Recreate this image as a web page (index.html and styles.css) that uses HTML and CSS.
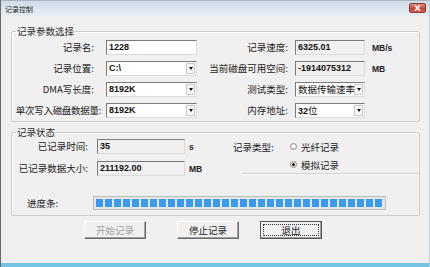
FILE: index.html
```html
<!DOCTYPE html>
<html lang="zh-CN">
    <head>
        <meta charset="UTF-8" />
        <meta name="viewport" content="width=device-width, initial-scale=1.0" />
        <title>记录控制</title>
        <link rel="stylesheet" href="styles.css">
    </head>
    <body>
        <div class="window">
            <div class="titlebar">
                <span class="title">记录控制</span>
                <span class="close-btn">
                    <svg width="7" height="6" viewBox="0 0 7 6">
                        <path d="M1 0.5 L6 5.5 M6 0.5 L1 5.5" stroke="#fff" stroke-width="1.6" />
                    </svg>
                </span>
            </div>
            <div class="client">
                <fieldset class="group group-params">
                    <legend>记录参数选择</legend>
                    <div class="param-grid">
                        <label class="lbl">记录名:</label>
                        <div class="edit">1228</div>
                        <label class="lbl lbl-right">记录速度:</label>
                        <div class="edit readonly">6325.01</div>
                        <span class="unit">MB/s</span>

                        <label class="lbl">记录位置:</label>
                        <div class="combo"><span class="combo-text">C:\</span><span class="combo-btn"></span></div>
                        <label class="lbl lbl-right">当前磁盘可用空间:</label>
                        <div class="edit readonly">-1914075312</div>
                        <span class="unit">MB</span>

                        <label class="lbl">DMA写长度:</label>
                        <div class="combo"><span class="combo-text">8192K</span><span class="combo-btn"></span></div>
                        <label class="lbl lbl-right">测试类型:</label>
                        <div class="combo"><span class="combo-text cjk">数据传输速率</span><span class="combo-btn"></span></div>
                        <span></span>

                        <label class="lbl lbl-long">单次写入磁盘数据量:</label>
                        <div class="combo"><span class="combo-text">8192K</span><span class="combo-btn"></span></div>
                        <label class="lbl lbl-right">内存地址:</label>
                        <div class="combo"><span class="combo-text">32<span class="cjk">位</span></span><span class="combo-btn"></span></div>
                        <span></span>
                    </div>
                </fieldset>

                <fieldset class="group group-status">
                    <legend>记录状态</legend>
                    <div class="status-top">
                        <div class="status-left">
                            <div class="status-row">
                                <label class="lbl status-lbl">已记录时间:</label>
                                <div class="edit readonly">35</div>
                                <span class="unit">s</span>
                            </div>
                            <div class="status-row">
                                <label class="lbl status-lbl">已记录数据大小:</label>
                                <div class="edit readonly">211192.00</div>
                                <span class="unit">MB</span>
                            </div>
                        </div>
                        <div class="status-right">
                            <div class="radio-row">
                                <span class="type-lbl">记录类型:</span>
                                <span class="radio"></span>
                                <span>光纤记录</span>
                            </div>
                            <div class="radio-row radio-indent">
                                <span class="radio checked"></span>
                                <span>模拟记录</span>
                            </div>
                            <div class="sep"></div>
                        </div>
                    </div>
                    <div class="progress-row">
                        <span class="progress-lbl">进度条:</span>
                        <div class="progress"><div class="progress-fill" style="width: 100%"></div></div>
                    </div>
                </fieldset>

                <div class="buttons">
                    <button class="btn btn-start" disabled>开始记录</button>
                    <button class="btn btn-stop">停止记录</button>
                    <button class="btn btn-exit"><span class="focus">退出</span></button>
                </div>
            </div>
            <div class="taskbar-edge"></div>
        </div>
    </body>
</html>
```

FILE: styles.css
```css
body {
    margin: 0;
    background: #fff;
}
.window {
    width: 430px;
    height: 267px;
    box-sizing: border-box;
    display: flex;
    flex-direction: column;
    background: #f0f0f0;
    border-left: 1px solid #6a6a6a;
    border-right: 1px solid #b9cfdf;
    font-family: "Noto Sans CJK SC", sans-serif;
    font-size: 9.5px;
    color: #1a1a1a;
}
.titlebar {
    height: 16px;
    flex: none;
    display: flex;
    align-items: center;
    justify-content: space-between;
    background: linear-gradient(to bottom, #cfdbe7, #dfe7f0 60%, #e6ecf2);
    border-top: 1px solid #a8b4c0;
    box-sizing: border-box;
    padding: 0 3px 0 4px;
}
.title {
    font-size: 7px;
    line-height: 10px;
    color: #222;
}
.close-btn {
    width: 17px;
    height: 10px;
    margin-top: -1px;
    display: flex;
    align-items: center;
    justify-content: center;
    background: linear-gradient(to bottom, #e08a7c, #c7463a 55%, #d0604f);
    border: 1px solid #8c3b33;
    border-radius: 2px;
    box-sizing: border-box;
}
.client {
    flex: 1;
    padding: 0 9px 0 10px;
}
.group {
    margin: 0;
    padding: 0;
    border: 1px solid #cdcdcd;
    border-radius: 2px;
    box-shadow: inset 1px 1px #fdfdfd;
}
.group legend {
    margin-left: 4px;
    padding: 0 1px;
    line-height: 14px;
    font-size: 9.5px;
    color: #2a2a2a;
}
.group-params {
    margin-top: 8px;
    padding: 2px 0 3px;
}
.param-grid {
    display: grid;
    grid-template-columns: 94px 91px 98px 70px auto;
    grid-auto-rows: 15px;
    row-gap: 6px;
    align-items: center;
}
.lbl {
    text-align: right;
    padding-right: 12px;
    line-height: 15px;
    white-space: nowrap;
}
.lbl-right {
    padding-right: 7px;
}
.lbl-long {
    padding-right: 5px;
    letter-spacing: -0.3px;
}
.edit,
.combo {
    height: 15px;
    box-sizing: border-box;
    border: 1px solid;
    border-color: #7b7b7b #dadada #dadada #7b7b7b;
    background: #fff;
    font: bold 9px/13px "Liberation Sans", "Noto Sans CJK SC", sans-serif;
    color: #111;
    white-space: nowrap;
    overflow: hidden;
}
.edit {
    padding: 0 2px;
}
.readonly {
    background: #f0f0f0;
}
.combo {
    display: flex;
    align-items: center;
}
.combo-text {
    flex: 1;
    padding-left: 2px;
    overflow: hidden;
}
.cjk {
    font-family: "Noto Sans CJK SC", sans-serif;
    font-weight: normal;
    font-size: 9.5px;
}
.combo-btn {
    width: 9px;
    height: 11px;
    margin-right: 1px;
    box-sizing: border-box;
    border: 1px solid #c9c9c9;
    background: #f5f5f5;
    display: flex;
    align-items: center;
    justify-content: center;
}
.combo-btn::after {
    content: "";
    border-left: 2px solid transparent;
    border-right: 2px solid transparent;
    border-top: 3px solid #111;
}
.unit {
    padding-left: 7px;
    font: bold 8.5px "Liberation Sans", sans-serif;
    color: #222;
}
.group-status {
    margin-top: 3px;
    padding: 0 0 5px;
}
.status-top {
    display: flex;
    align-items: flex-start;
}
.status-left {
    width: 221px;
    display: flex;
    flex-direction: column;
    gap: 7px;
}
.status-row {
    display: flex;
    align-items: center;
    height: 15px;
}
.status-lbl {
    width: 85px;
    box-sizing: border-box;
    padding-right: 9px;
}
.status-row .edit {
    width: 88px;
}
.status-row .unit {
    padding-left: 4px;
}
.status-right {
    flex: 1;
    display: flex;
    flex-direction: column;
    gap: 3px;
}
.radio-row {
    display: flex;
    align-items: center;
    height: 15px;
}
.type-lbl {
    width: 57px;
}
.radio-indent {
    padding-left: 57px;
}
.radio {
    width: 7px;
    height: 7px;
    box-sizing: border-box;
    margin-right: 4px;
    border: 1px solid #8e8e8e;
    border-radius: 50%;
    background: radial-gradient(circle, #fff, #e2e2e2);
    display: flex;
    align-items: center;
    justify-content: center;
}
.radio.checked::after {
    content: "";
    width: 3px;
    height: 3px;
    border-radius: 50%;
    background: #1c1c1c;
}
.sep {
    margin: -2px 0 0 9px;
    border-top: 1px solid #d2d2d2;
    border-bottom: 1px solid #fbfbfb;
}
.progress-row {
    display: flex;
    align-items: center;
    margin-top: 20px;
    padding-left: 15px;
}
.progress-lbl {
    width: 66px;
}
.progress {
    width: 293px;
    height: 14px;
    box-sizing: border-box;
    border: 1px solid #bcbcbc;
    background: #e6e6e6;
    padding: 2px;
}
.progress-fill {
    height: 100%;
    background: repeating-linear-gradient(to right, #3a9af0 0 7px, transparent 7px 9px);
}
.buttons {
    display: flex;
    margin-top: 5px;
    padding-left: 73px;
}
.btn {
    width: 62px;
    height: 18px;
    box-sizing: border-box;
    padding: 0;
    margin: 0;
    border: 1px solid;
    border-color: #fff #6a6a6a #6a6a6a #fff;
    box-shadow: inset -1px -1px #a0a0a0;
    background: #f0f0f0;
    font-family: "Noto Sans CJK SC", sans-serif;
    font-size: 9.5px;
    color: #1a1a1a;
    line-height: 14px;
}
.btn-start {
    color: #a0a0a0;
}
.btn-stop {
    margin-left: 31px;
}
.btn-exit {
    margin-left: 21px;
    border-color: #555;
    padding: 2px;
}
.focus {
    display: block;
    height: 100%;
    box-sizing: border-box;
    border: 1px dotted #333;
    line-height: 11px;
}
.taskbar-edge {
    height: 4px;
    flex: none;
    background: #74c3e2;
}
```
